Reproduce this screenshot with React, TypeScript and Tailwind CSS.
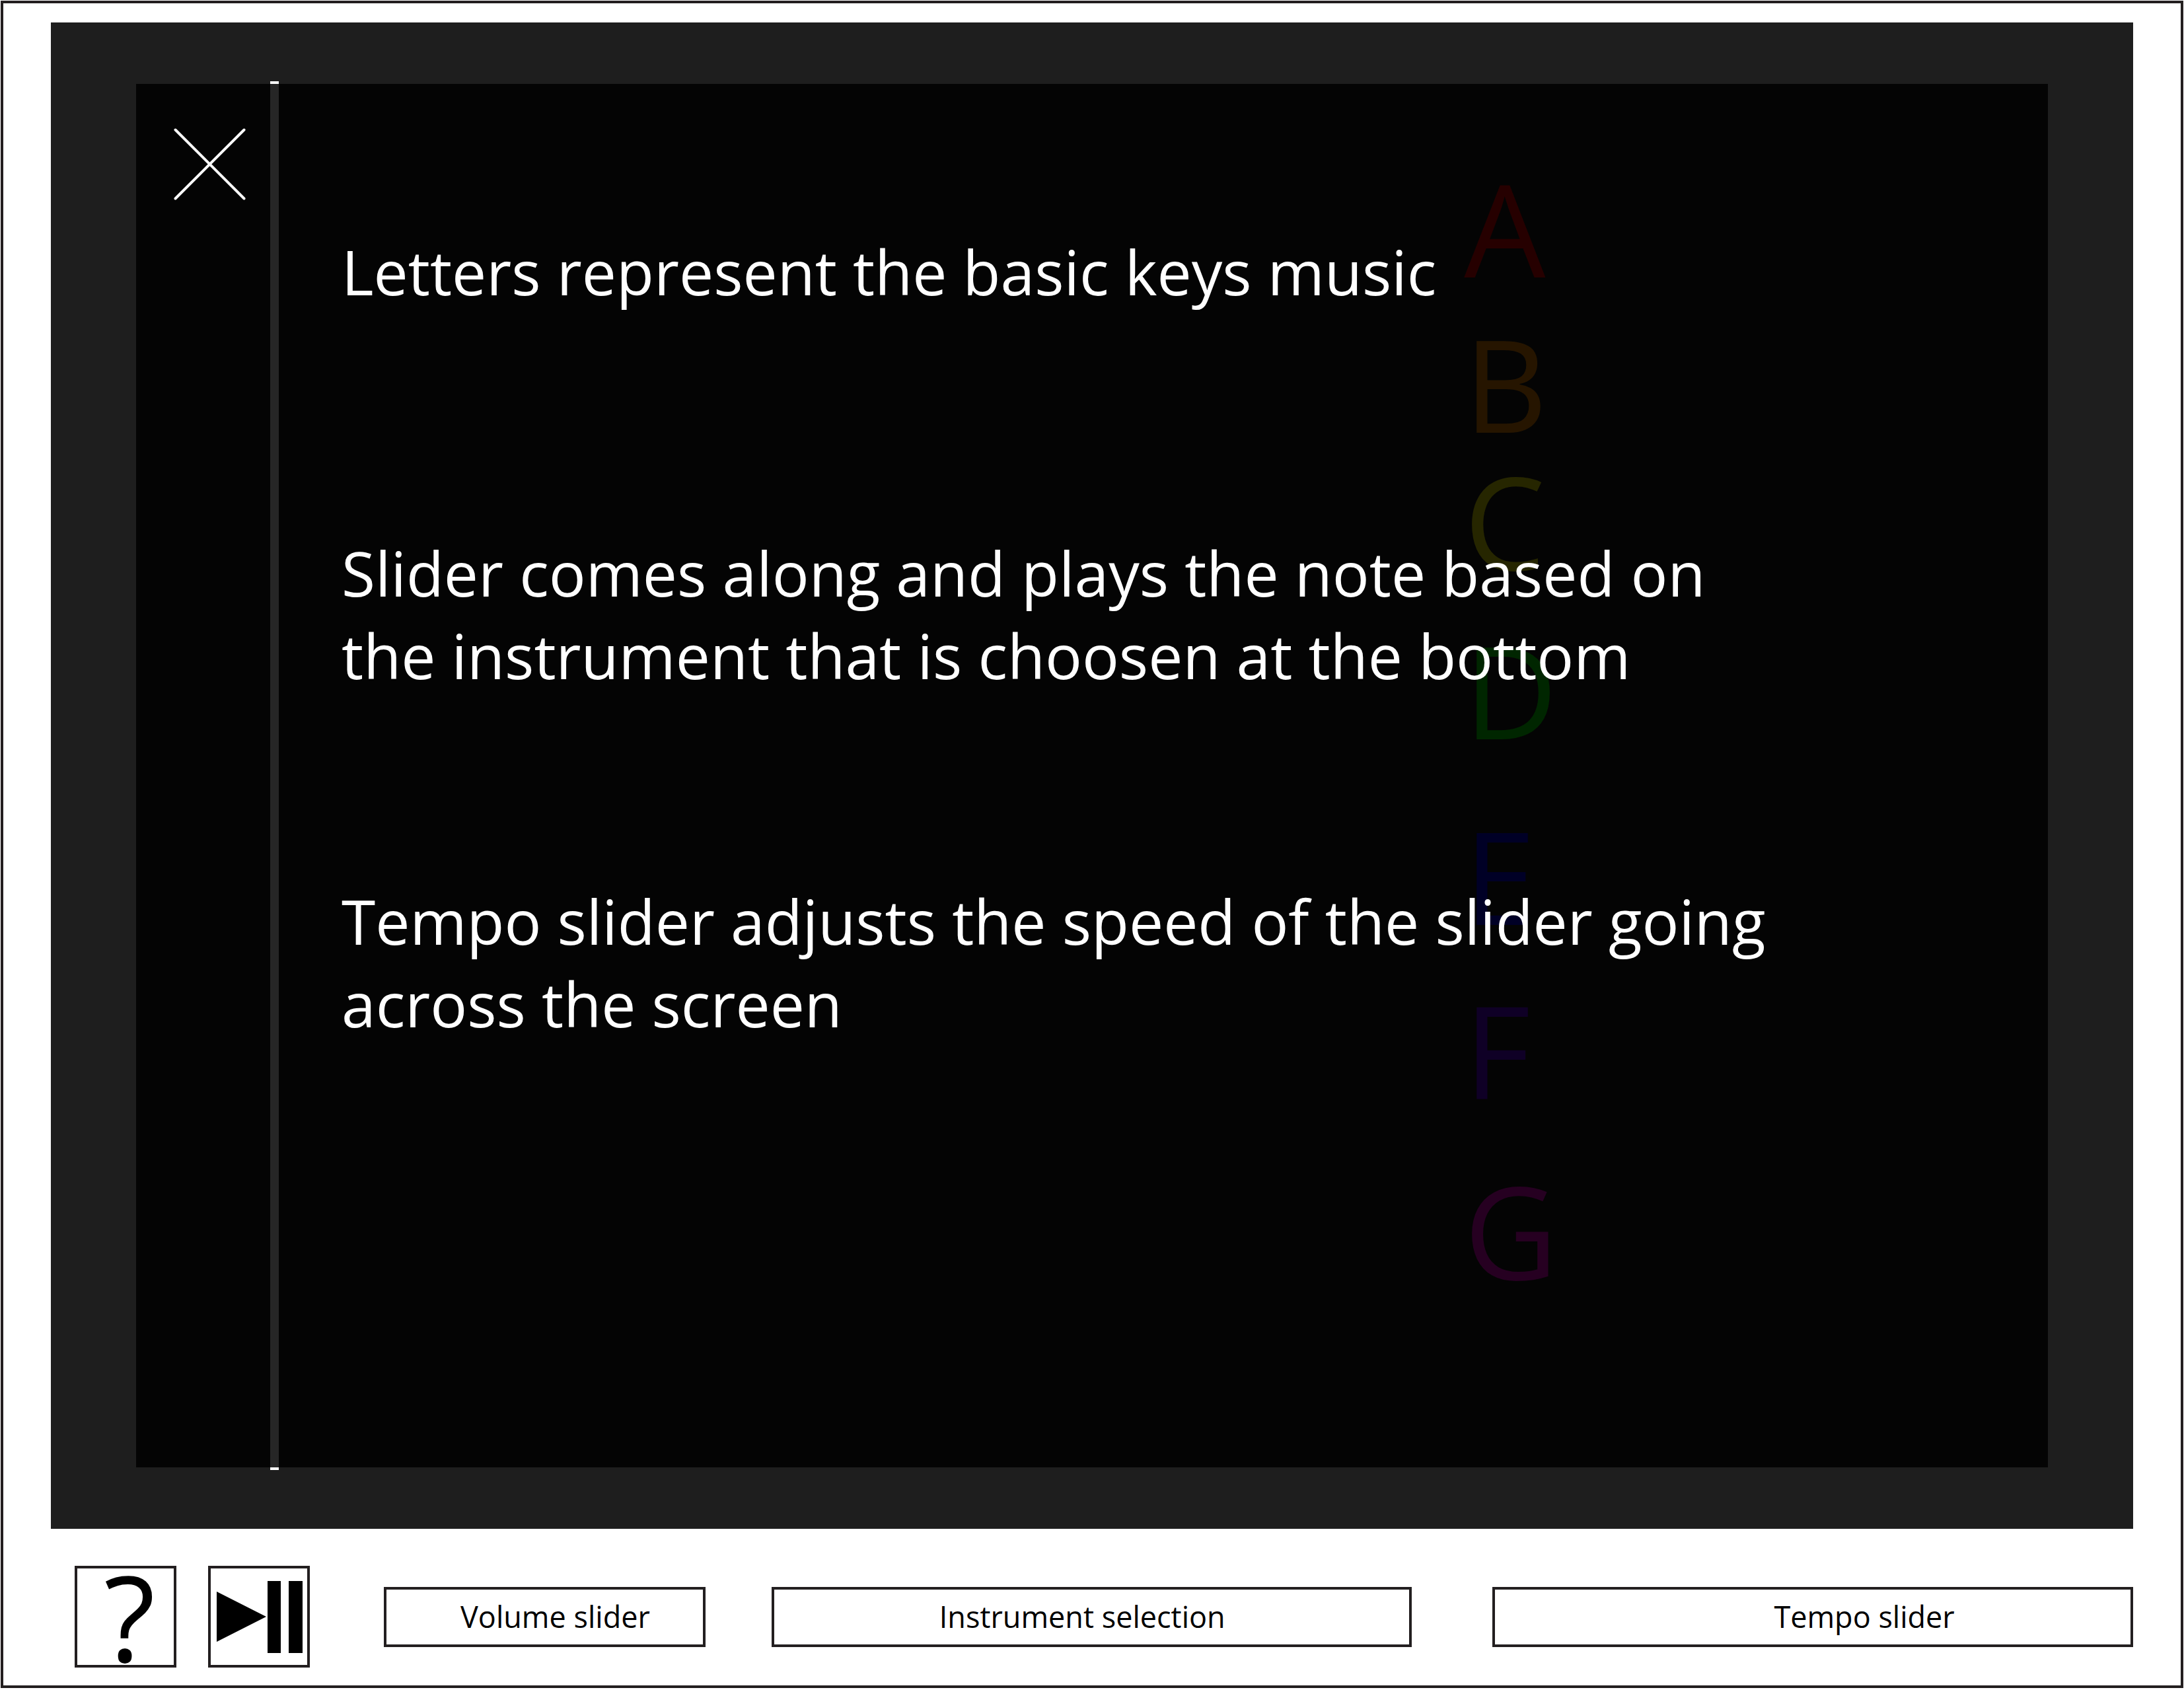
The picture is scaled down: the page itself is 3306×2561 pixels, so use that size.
import { useState } from "react";

const keys = [
  { name: "A", color: "text-[#ff0000]" },
  { name: "B", color: "text-[#ff9000]" },
  { name: "C", color: "text-[#ffff00]" },
  { name: "D", color: "text-[#00ff00]" },
  { name: "E", color: "text-[#0000ff]" },
  { name: "F", color: "text-[#6600ff]" },
  { name: "G", color: "text-[#ff00dd]" },
];

function KeyColumn() {
  return (
    <ul className="col-start-1 row-start-1 grid content-start grid-rows-[235px_208px_256px_281px_264px_273px_200px] pt-[211px] pl-[68%]">
      {keys.map((key) => (
        <li key={key.name} className={`-ml-1 text-[195px] leading-[200px] ${key.color}`}>
          {key.name}
        </li>
      ))}
    </ul>
  );
}

function Playhead() {
  return (
    <div className="col-start-1 row-start-1 flex py-[89px] pl-[332px]">
      <div className="w-[13px] bg-white" />
    </div>
  );
}

function HelpOverlay() {
  return (
    <section
      aria-label="Help"
      className="z-10 col-start-1 row-start-1 mx-[129px] my-[93px] flex items-start bg-black/85 text-white"
    >
      <div className="w-[311px] shrink-0 pt-[67px] pl-[57px]">
        <button type="button" aria-label="Close" className="block">
          <svg viewBox="0 0 109 109" className="size-[109px]" stroke="white" strokeWidth="4" strokeLinecap="round">
            <path d="M2.500 2.500L106.500 106.500M106.500 2.500L2.500 106.500" />
          </svg>
        </button>
      </div>
      <div className="max-w-[2240px] pt-[222px] text-[93px] leading-[125px]">
        <p>Letters represent the basic keys music</p>
        <p className="mt-[331px]">
          Slider comes along and plays the note based on
          <br />
          the instrument that is choosen at the bottom
        </p>
        <p className="mt-[277px]">
          Tempo slider adjusts the speed of the slider going
          <br />
          across the screen
        </p>
      </div>
    </section>
  );
}

function SliderBox({ label, indent }: { label: string; indent: string }) {
  const [value, setValue] = useState(50);
  return (
    <label
      className={`relative flex h-[91px] w-full items-center border-4 border-[#231f20] whitespace-nowrap ${indent}`}
    >
      {label}
      <input
        type="range"
        value={value}
        onChange={(e) => setValue(Number(e.target.value))}
        className="absolute inset-0 size-full appearance-none opacity-0"
      />
    </label>
  );
}

function Toolbar() {
  return (
    <footer className="mt-14 mb-[27px] flex items-center pl-9 text-[45px] leading-[56px] text-black">
      <button
        type="button"
        aria-label="Help"
        className="flex h-[154px] w-[154px] shrink-0 items-center justify-center border-4 border-[#231f20] pl-3 text-[180px] leading-[146px] font-medium"
      >
        ?
      </button>
      <button
        type="button"
        aria-label="Play or pause"
        className="ml-12 h-[154px] w-[154px] shrink-0 border-4 border-[#231f20]"
      >
        <svg viewBox="0 0 146 146" className="size-full" fill="black">
          <path d="M9 35L84 73L9 111ZM86 19H106V128H86ZM118 19H139V128H118Z" />
        </svg>
      </button>
      <div className="ml-28 min-w-0 flex-[487]">
        <SliderBox label="Volume slider" indent="pl-28" />
      </div>
      <div className="ml-[100px] min-w-0 flex-[970]">
        <select
          aria-label="Instrument selection"
          className="block h-[91px] w-full appearance-none border-4 border-[#231f20] bg-white pl-[250px]"
        >
          <option>Instrument selection</option>
        </select>
      </div>
      <div className="ml-[122px] min-w-0 flex-[970]">
        <SliderBox label="Tempo slider" indent="pl-[422px]" />
      </div>
    </footer>
  );
}

export default function App() {
  return (
    <div className="flex min-h-screen bg-white p-px pb-1.5 font-['Open_Sans','Noto_Sans',sans-serif]">
      <div className="flex flex-1 flex-col border-4 border-[#231f20] px-[72px] pt-[29px]">
        <main className="grid flex-1 bg-[#1e1e1e]">
          <KeyColumn />
          <Playhead />
          <HelpOverlay />
        </main>
        <Toolbar />
      </div>
    </div>
  );
}
